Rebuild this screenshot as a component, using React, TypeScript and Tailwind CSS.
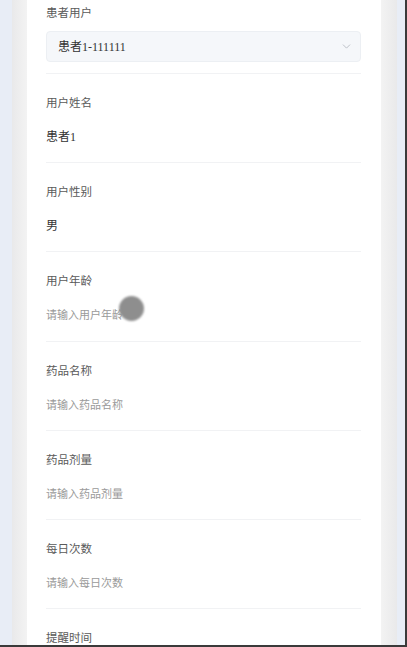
import { ChevronDown } from "lucide-react";

const fields = [
  { label: "用户姓名", value: "患者1", placeholder: false },
  { label: "用户性别", value: "男", placeholder: false },
  { label: "用户年龄", value: "请输入用户年龄", placeholder: true },
  { label: "药品名称", value: "请输入药品名称", placeholder: true },
  { label: "药品剂量", value: "请输入药品剂量", placeholder: true },
  { label: "每日次数", value: "请输入每日次数", placeholder: true },
];

const font = "font-['Liberation_Serif','Noto_Sans_CJK_SC',serif]";

const Field = ({ label, value, placeholder }: { label: string; value: string; placeholder: boolean }) => (
  <div className="border-t border-[#f1f2f4] pt-[20px] pb-[17.2px]">
    <div className="text-[11.5px] leading-[16px] text-[#5a5a5a]">{label}</div>
    <div
      className={`mt-[19px] leading-[16px] ${font} ${
        placeholder ? "text-[11px] text-[#9a9a9a]" : "text-[12px] text-[#333]"
      }`}
    >
      {value}
    </div>
  </div>
);

const App = () => {
  return (
    <div className="relative h-[647px] w-[407px] overflow-hidden bg-[#e8edf6] font-['Noto_Sans_CJK_SC',sans-serif]">
      <div className="flex h-[645px]">
        <div className="w-[12px] shrink-0" />
        <div className="w-[15px] shrink-0 bg-gradient-to-r from-[#e9e9ea] to-[#f3f3f3]" />
        <div className="w-[354px] shrink-0 bg-white pl-[19px] pr-[20px] pt-[4px]">
          <div className="pb-[11px]">
            <div className="text-[11.5px] leading-[16px] text-[#5a5a5a]">患者用户</div>
            <div className="mt-[11px] flex h-[31px] items-center justify-between rounded-[4px] border border-[#eceff3] bg-[#f5f7fa] pl-[11px] pr-[7px]">
              <span className={`text-[12px] text-[#333] ${font}`}>患者1-111111</span>
              <ChevronDown size={13} strokeWidth={1.5} className="text-[#b0b4bb]" />
            </div>
          </div>
          {fields.map((f) => (
            <Field key={f.label} {...f} />
          ))}
          <div className="border-t border-[#f1f2f4] pt-[20px]">
            <div className="text-[11.5px] leading-[16px] text-[#5a5a5a]">提醒时间</div>
          </div>
        </div>
        <div className="w-[16px] shrink-0 bg-gradient-to-r from-[#f3f3f3] to-[#e9e9ea]" />
        <div className="w-[8px] shrink-0" />
        <div className="w-[2px] shrink-0 bg-[#3a3a3a]" />
      </div>
      <div className="h-[2px] bg-[#3a3a3a]" />
      <div className="absolute left-[119px] top-[296px] h-[25px] w-[25px] rounded-full bg-[#8e8e8e] blur-[1px]" />
    </div>
  );
};

export default App;
